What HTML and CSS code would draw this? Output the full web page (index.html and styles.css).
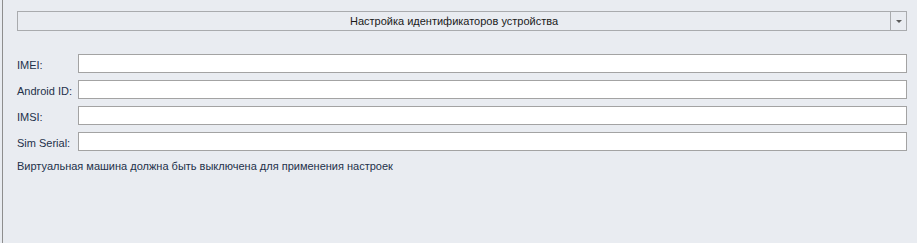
FILE: index.html
```html
<!DOCTYPE html>
<html lang="ru">
<head>
    <meta charset="UTF-8">
    <title>Настройка идентификаторов устройства</title>
    <link rel="stylesheet" href="styles.css">
</head>
<body>
    <div class="panel">
        <div class="combo">
            <div class="combo-text">Настройка идентификаторов устройства</div>
            <div class="combo-button"><span class="arrow"></span></div>
        </div>

        <div class="fields">
            <div class="row">
                <label>IMEI:</label>
                <input type="text">
            </div>
            <div class="row">
                <label>Android ID:</label>
                <input type="text">
            </div>
            <div class="row">
                <label>IMSI:</label>
                <input type="text">
            </div>
            <div class="row">
                <label>Sim Serial:</label>
                <input type="text">
            </div>
        </div>

        <p class="note">Виртуальная машина должна быть выключена для применения настроек</p>
    </div>
</body>
</html>
```

FILE: styles.css
```css
html, body {
    height: 100%;
}
body {
    margin: 0;
    padding-left: 2px;
    box-sizing: border-box;
    background-color: #e9ecf1;
    font-family: "Liberation Sans", Arial, sans-serif;
    font-size: 11px;
    color: #23314a;
}
.panel {
    height: 100%;
    box-sizing: border-box;
    border-left: 1px solid #8e8e8e;
    padding: 11px 10px 0 14px;
}
.combo {
    display: flex;
    height: 20px;
    box-sizing: border-box;
    border: 1px solid #a9abae;
}
.combo-text {
    flex: 1;
    text-align: center;
    line-height: 18px;
    color: #1a1a1a;
}
.combo-button {
    width: 15px;
    border-left: 1px solid #a9abae;
    display: flex;
    align-items: center;
    justify-content: center;
}
.arrow {
    width: 0;
    height: 0;
    border-left: 3px solid transparent;
    border-right: 3px solid transparent;
    border-top: 3px solid #5a5a5a;
}
.fields {
    margin-top: 23px;
    display: flex;
    flex-direction: column;
    gap: 7px;
}
.row {
    display: flex;
    align-items: center;
    height: 19px;
}
.row label {
    width: 61px;
    padding-top: 2px;
}
.row input {
    flex: 1;
    height: 19px;
    box-sizing: border-box;
    margin: 0;
    padding: 0 3px;
    border: 1px solid #a3a3a3;
    background: #fff;
    outline: none;
}
.note {
    margin: 8px 0 0;
    line-height: 14px;
}
```
